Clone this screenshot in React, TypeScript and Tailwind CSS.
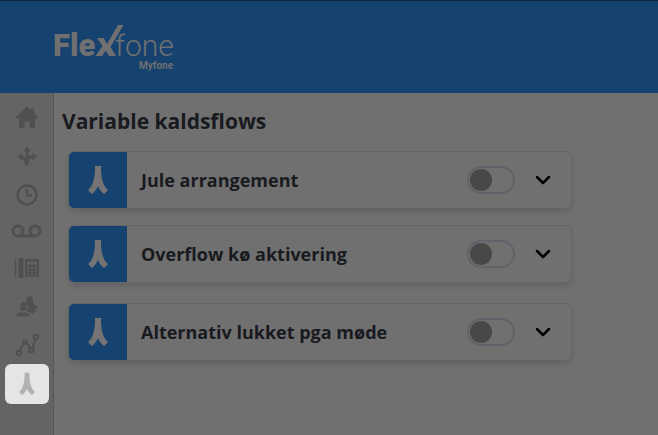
import { useState, type ReactNode } from "react"

const FlowIcon = ({ className }: { className?: string }) => (
  <svg viewBox="0 0 20 30" className={className} aria-hidden="true">
    <path
      fill="currentColor"
      d="M7 1h6c0 6 .3 10 1.200 13.500 1.200 4.800 2.800 8.300 5.800 10.500l-3.800 4c-2.800-2-4.700-4.500-6.200-8-1.500 3.500-3.400 6-6.200 8L0 25c3-2.200 4.600-5.700 5.800-10.500C6.700 11 7 7 7 1z"
    />
  </svg>
)

const Icon = ({ children }: { children: ReactNode }) => (
  <svg
    viewBox="0 0 32 28"
    className="h-7 w-8"
    fill="none"
    stroke="currentColor"
    strokeWidth="2"
    aria-hidden="true"
  >
    {children}
  </svg>
)

const menu = [
  {
    name: "Home",
    icon: (
      <path
        fill="currentColor"
        stroke="none"
        d="M16 3.500 5 14V15.500h3V25h5.500V18.500h5V25H24V15.500h3V14l-4-3.800V5.500h-3.500v1.400z"
      />
    ),
  },
  {
    name: "Call flows",
    icon: (
      <>
        <path
          strokeWidth="3"
          d="M16 24.500V9M15.500 24c0-5-1.500-8-6-8M16.500 21c0-3.500 1.500-5.500 6-5.500"
        />
        <path
          fill="currentColor"
          stroke="none"
          d="M16 5.500l3.500 5h-7zM6 15l5-3v7.500zM26.500 15l-5.500-3v7.500z"
        />
      </>
    ),
  },
  {
    name: "Opening hours",
    icon: (
      <>
        <circle cx="16" cy="16" r="9.500" strokeWidth="2.400" />
        <path strokeWidth="2.400" d="M16 10V16.500h5" />
      </>
    ),
  },
  {
    name: "Voicemail",
    icon: (
      <>
        <circle cx="7" cy="14" r="5" strokeWidth="3" />
        <circle cx="24" cy="14" r="5" strokeWidth="3" />
        <path strokeWidth="3" d="M7 19h17" />
      </>
    ),
  },
  {
    name: "Phones",
    icon: (
      <>
        <path strokeWidth="1.500" d="M4.500 4v18" />
        <rect x="7.500" y="3" width="5" height="20" rx="1.500" fill="currentColor" stroke="none" />
        <path
          fill="currentColor"
          fillRule="evenodd"
          stroke="none"
          d="M14 4h14v18H14zM16 6.500v3h10v-3zM16 12v1.500h2V12zm4 0v1.500h2V12zm4 0v1.500h2V12zm-8 3.500V17h2v-1.500zm4 0V17h2v-1.500zm4 0V17h2v-1.500zM16 19v1.200h2V19zm4 0v1.200h2V19zm4 0v1.200h2V19z"
        />
      </>
    ),
  },
  {
    name: "Users",
    icon: (
      <g fill="currentColor" stroke="none">
        <rect x="15.500" y="3.500" width="6.500" height="10" rx="3.200" />
        <rect x="9.500" y="9" width="6" height="9" rx="3" />
        <path d="M5.500 23.500c-.5-3 1.500-4.500 4-4l2 .6 2-.6c3 0 5 1.500 5 4z" />
        <path d="M17 15l5-4.500c1.500 1.500 4.500 2 5 4.500l-3 1 1 1.500-3.500 3.500-3-2.500z" />
        <path d="M14.500 18l3.500-5 2 6z" />
      </g>
    ),
  },
  {
    name: "Statistics",
    icon: (
      <>
        <path d="M8.500 20l4.500-8M15.500 12l4 5M21.500 17l3-9" />
        <circle cx="8" cy="22" r="2.300" />
        <circle cx="14" cy="11" r="1.800" />
        <circle cx="20.500" cy="19" r="2.300" />
        <circle cx="25" cy="6" r="2.300" />
      </>
    ),
  },
]

const Logo = () => (
  <svg viewBox="0 0 124 50" className="h-[50px] w-[124px] text-[#707070]" fill="currentColor">
    <text x="0" y="34" className="font-['Roboto'] text-[31px] font-black">
      Fle
    </text>
    <path d="M44 16h6.500l3.500 6L65 3h5.500L57.500 25l5.500 9h-7l-3.200-5.200L49 34h-6.500l7-10z" />
    <text x="62" y="34" className="font-['Roboto'] text-[30px] font-light">
      fone
    </text>
    <text x="86" y="47" className="font-['Roboto'] text-[10px] font-bold">
      Myfone
    </text>
  </svg>
)

const FlowCard = ({ name }: { name: string }) => {
  const [active, setActive] = useState(false)
  const [open, setOpen] = useState(false)

  return (
    <li className="flex h-[58px] items-center overflow-hidden rounded-md border border-[#65666a] bg-[#707070] shadow-md">
      <div className="flex w-[58px] shrink-0 items-center justify-center self-stretch bg-[#16426f] text-[#747474]">
        <FlowIcon className="h-[30px] w-5" />
      </div>
      <label className="flex flex-1 items-center justify-between pl-[14px]">
        <span className="text-lg font-bold">{name}</span>
        <input
          type="checkbox"
          role="switch"
          checked={active}
          onChange={() => setActive(!active)}
          className="flex h-7 w-12 shrink-0 appearance-none items-center rounded-full border-2 border-[#62636a] px-px before:size-[22px] before:rounded-full before:bg-[#484848] checked:justify-end"
        />
      </label>
      <button
        type="button"
        aria-label={name}
        aria-expanded={open}
        onClick={() => setOpen(!open)}
        className="mx-4 p-1 text-black"
      >
        <svg viewBox="0 0 16 16" className="size-4" fill="none" aria-hidden="true">
          <path
            d="M2 5l6 6 6-6"
            stroke="currentColor"
            strokeWidth="2.500"
            strokeLinecap="round"
            strokeLinejoin="round"
          />
        </svg>
      </button>
    </li>
  )
}

const App = () => {
  return (
    <div className="flex min-h-screen flex-col bg-[#707070] font-['Open_Sans',sans-serif] text-[#191a20]">
      <header className="border-t border-[#0c2744] bg-[#16426f] px-[53px] pt-[21px] pb-[21px]">
        <a href="#" className="block w-fit">
          <Logo />
        </a>
      </header>
      <div className="flex flex-1">
        <nav className="flex w-[54px] shrink-0 flex-col items-center border-r border-[#575757] bg-[#646464] pt-[5px] text-[#505050]">
          {menu.map((item) => (
            <a
              key={item.name}
              href="#"
              aria-label={item.name}
              className="flex h-[38px] items-center"
            >
              <Icon>{item.icon}</Icon>
            </a>
          ))}
          <a
            href="#"
            aria-label="Variable kaldsflows"
            aria-current="page"
            className="flex h-10 w-11 items-center justify-center rounded-md bg-[#e4e5e5] text-[#b2b2b2]"
          >
            <FlowIcon className="h-6 w-4" />
          </a>
        </nav>
        <main className="flex-1 px-2 pt-3">
          <h1 className="text-[21px] leading-8 font-bold">Variable kaldsflows</h1>
          <div className="max-w-[510px] space-y-5 pt-[14px] pl-[6px]">
            <ul className="space-y-4">
              <FlowCard name="Jule arrangement" />
              <FlowCard name="Overflow kø aktivering" />
            </ul>
            <ul>
              <FlowCard name="Alternativ lukket pga møde" />
            </ul>
          </div>
        </main>
      </div>
    </div>
  )
}

export default App
